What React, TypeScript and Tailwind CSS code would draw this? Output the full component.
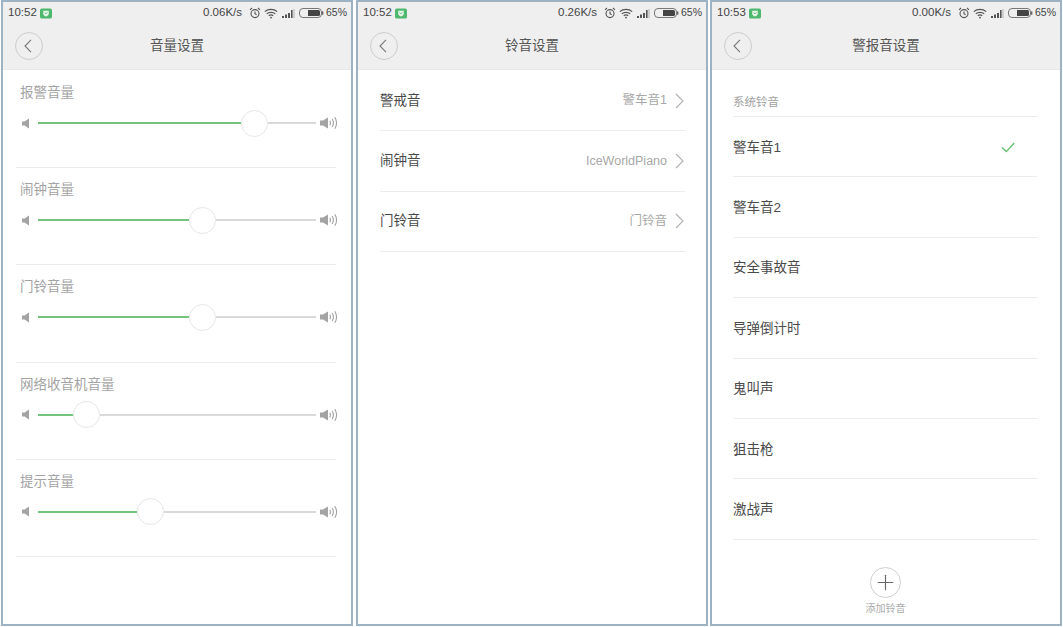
import React from "react";
import { Plus } from "lucide-react";

const font = "font-['Liberation_Sans','Noto_Sans_CJK_SC',sans-serif]";

const Shield = () => (
  <svg width="12" height="11" viewBox="0 0 13 11">
    <rect width="13" height="11" rx="2" fill="#4fb86f" />
    <path d="M3.5 2.5h6v3.2c0 1.4-1.5 2.4-3 3-1.5-.6-3-1.6-3-3z" fill="#e8f6ea" />
    <path d="M5 4.6l1.3 1.3L8 4.2" fill="none" stroke="#4fb86f" strokeWidth="1" />
  </svg>
);

const Alarm = () => (
  <svg width="12" height="12" viewBox="0 0 12 12" fill="none" stroke="#555" strokeWidth="1.1">
    <circle cx="6" cy="6.6" r="4" />
    <path d="M6 4.4v2.4l1.6 1M1 2.8L3 1M11 2.8L9 1" />
  </svg>
);

const Wifi = () => (
  <svg width="14" height="11" viewBox="0 0 14 11" fill="none" stroke="#555" strokeWidth="1.2">
    <path d="M.8 3.6c3.4-3 9-3 12.4 0M2.8 5.8c2.3-2 6.1-2 8.4 0M4.8 7.8c1.2-1 3.2-1 4.4 0" />
    <circle cx="7" cy="9.6" r=".9" fill="#555" stroke="none" />
  </svg>
);

const Signal = () => (
  <svg width="13" height="9" viewBox="0 0 13 9" fill="#555">
    <rect x="0" y="7" width="2" height="2" />
    <rect x="3" y="5.5" width="2" height="3.5" />
    <rect x="6" y="4" width="2" height="5" />
    <rect x="9" y="1" width="1.6" height="8" />
    <rect x="11.4" y="0" width="1.2" height="9" fill="#bbb" />
  </svg>
);

const Battery = () => (
  <svg width="25" height="10" viewBox="0 0 25 10">
    <rect x=".5" y=".5" width="22" height="9" rx="3.5" fill="none" stroke="#777" />
    <path d="M9 2h10.5a1.5 1.5 0 0 1 1.5 1.5v3a1.5 1.5 0 0 1-1.5 1.5H9z" fill="#444" />
    <rect x="23" y="3.2" width="1.4" height="3.6" rx=".6" fill="#666" />
  </svg>
);

const SpeakerLow = () => (
  <svg width="10" height="11" viewBox="0 0 10 11" fill="#a3a3a3">
    <path d="M1 3.4h2.6L8 .6v9.8L3.6 7.6H1z" />
  </svg>
);

const SpeakerHigh = () => (
  <svg width="18" height="14" viewBox="0 0 18 14" fill="none" stroke="#a0a0a0" strokeWidth="1.1">
    <path d="M0 4.6h3L8 1.4v11.2L3 9.4H0z" fill="#a3a3a3" stroke="none" />
    <path d="M9.8 4.8c.8 1.4.8 3 0 4.4M12.2 3c1.5 2.5 1.5 5.5 0 8M14.8 1.2c2.2 3.6 2.2 8 0 11.6" />
  </svg>
);

const BackArrow = () => (
  <svg width="8" height="14" viewBox="0 0 8 14" fill="none" stroke="#777" strokeWidth="1.1">
    <path d="M7 .8L1 7l6 6.2" />
  </svg>
);

const RowArrow = () => (
  <svg width="9" height="16" viewBox="0 0 9 16" fill="none" stroke="#b0b0b0" strokeWidth="1.1">
    <path d="M1 1l7 7-7 7" />
  </svg>
);

const TickMark = () => (
  <svg width="14" height="11" viewBox="0 0 14 11" fill="none" stroke="#66c06c" strokeWidth="1.4">
    <path d="M1 5.4l4.4 4.2L13.2 1" />
  </svg>
);

const StatusBar = ({ time, speed }: { time: string; speed: string }) => (
  <div className="h-[22px] flex items-center pl-[5px] pr-[5px] text-[11.5px] text-[#444]">
    <span>{time}</span>
    <span className="ml-[3px]"><Shield /></span>
    <span className="ml-auto">{speed}</span>
    <span className="ml-[7px]"><Alarm /></span>
    <span className="ml-[3px]"><Wifi /></span>
    <span className="ml-[4px]"><Signal /></span>
    <span className="ml-[4px]"><Battery /></span>
    <span className="ml-[2px] w-[20px] text-[10.5px]">65%</span>
  </div>
);

const Header = ({ title, time, speed }: { title: string; time: string; speed: string }) => (
  <div className="h-[68px] flex-none bg-[#efeff0] border-b border-[#e8e8e8]">
    <StatusBar time={time} speed={speed} />
    <div className="flex items-center h-[28px] mt-[8px] pl-[12px]">
      <div className="w-[28px] h-[28px] rounded-full border border-[#cdcdcd] flex items-center justify-center pr-[2px]">
        <BackArrow />
      </div>
      <div className="flex-1 text-center text-[13.5px] text-[#555] pr-[40px]">{title}</div>
    </div>
  </div>
);

const Panel = ({ className, children }: { className?: string; children: React.ReactNode }) => (
  <div className={`w-[352px] flex-none h-[626px] border-2 border-[#9db3c4] flex flex-col bg-white ${className ?? ""}`}>
    {children}
  </div>
);

const volumes = [
  { label: "报警音量", fill: 203 },
  { label: "闹钟音量", fill: 151 },
  { label: "门铃音量", fill: 151 },
  { label: "网络收音机音量", fill: 35 },
  { label: "提示音量", fill: 99 },
];

const VolumeRow = ({ label, fill }: { label: string; fill: number }) => (
  <div className="h-[97.2px] flex-none ml-[13px] mr-[15px] border-b border-[#ececec]">
    <div className="pl-[4px] pt-[13px] h-[38px] text-[13.5px] leading-[18px] text-[#a3a3a3]">{label}</div>
    <div className="flex items-center h-[28px]">
      <span className="ml-[5px] w-[17px] flex-none flex"><SpeakerLow /></span>
      <div className="h-[2px] bg-[#72c47f]" style={{ width: fill }} />
      <div className="w-[27px] h-[27px] flex-none rounded-full bg-white border border-[#e6e6e6]" />
      <div className="h-[2px] flex-1 bg-[#d9d9d9]" />
      <span className="ml-[4px] mr-[-2px] flex-none flex"><SpeakerHigh /></span>
    </div>
  </div>
);

const ringtones = [
  { name: "警戒音", value: "警车音1" },
  { name: "闹钟音", value: "IceWorldPiano" },
  { name: "门铃音", value: "门铃音" },
];

const alarms = ["警车音1", "警车音2", "安全事故音", "导弹倒计时", "鬼叫声", "狙击枪", "激战声"];

export default function App() {
  return (
    <div className={`w-[1063px] h-[627px] overflow-hidden bg-white flex pl-[1px] ${font}`}>
      <Panel>
        <Header title="音量设置" time="10:52" speed="0.06K/s" />
        <div className="pt-[1px]">
          {volumes.map((v) => (
            <VolumeRow key={v.label} label={v.label} fill={v.fill} />
          ))}
        </div>
      </Panel>
      <Panel className="ml-[3px]">
        <Header title="铃音设置" time="10:52" speed="0.26K/s" />
        <div className="ml-[22px] mr-[21px] pt-[1px]">
          {ringtones.map((r) => (
            <div key={r.name} className="h-[60.3px] flex items-center border-b border-[#ececec]">
              <span className="text-[13.5px] text-[#4a4a4a]">{r.name}</span>
              <span className="ml-auto text-[12.5px] text-[#a8a8a8]">{r.value}</span>
              <span className="ml-[8px] mr-[1px] flex"><RowArrow /></span>
            </div>
          ))}
        </div>
      </Panel>
      <Panel className="ml-[2px]">
        <Header title="警报音设置" time="10:53" speed="0.00K/s" />
        <div className="ml-[21px] mr-[23px] flex-1 flex flex-col">
          <div className="h-[47px] flex-none flex items-end pb-[5px] border-b border-[#ececec] text-[11.5px] text-[#a0a0a0]">系统铃音</div>
          {alarms.map((name, i) => (
            <div key={name} className="h-[60.4px] flex-none flex items-center pt-[2px] border-b border-[#ececec] text-[13.5px] text-[#4a4a4a]">
              <span>{name}</span>
              {i === 0 && <span className="ml-auto mr-[22px] flex"><TickMark /></span>}
            </div>
          ))}
          <div className="flex flex-col items-center mt-[27px] pl-[1px]">
            <div className="w-[31px] h-[31px] rounded-full border border-[#cfcfcf] flex items-center justify-center">
              <Plus size={25} strokeWidth={1.1} color="#666" />
            </div>
            <div className="mt-[3px] text-[10px] text-[#aaa]">添加铃音</div>
          </div>
        </div>
      </Panel>
    </div>
  );
}
